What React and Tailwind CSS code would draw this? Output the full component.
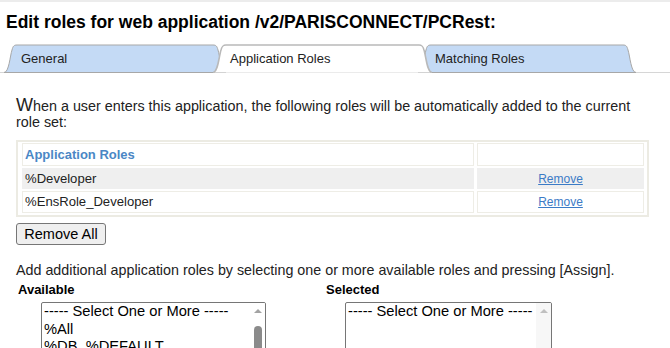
import React from "react";

const font = { fontFamily: '"Liberation Sans", Arial, sans-serif' };

const tabs = [
  { label: "General", cls: "w-[222px]", w: 222 },
  { label: "Application Roles", cls: "w-[219px] -ml-[13px] z-10", w: 219, active: true },
  { label: "Matching Roles", cls: "w-[218px] -ml-[14px]", w: 218 },
];

function tabPath(w, closed) {
  const d = `M0,28.5 C5,28.5 6,12 8,6 C9,2 10,1 13,1 L${w - 13},1 C${w - 10},1 ${w - 9},2 ${w - 8},6 C${w - 6},12 ${w - 5},28.5 ${w},28.5`;
  return closed ? d + " Z" : d;
}

function Tab({ tab }) {
  return (
    <div className={`relative h-[29px] shrink-0 ${tab.cls}`}>
      <svg className="absolute inset-0" width={tab.w} height="29" viewBox={`0 0 ${tab.w} 29`}>
        {tab.active ? (
          <>
            <path d={tabPath(tab.w, true)} fill="#ffffff" />
            <path d={tabPath(tab.w, false)} fill="none" stroke="#b9b9b9" strokeWidth="1.6" />
          </>
        ) : (
          <path d={tabPath(tab.w, true)} fill="#c4daf5" stroke="#a7a7a7" strokeWidth="1" />
        )}
      </svg>
      <span className="relative block pl-[17px] pt-[7px] text-[13px] leading-[15px] text-[#222]">{tab.label}</span>
    </div>
  );
}

function ListBox({ cls, items, active }) {
  return (
    <div className={`relative h-[70px] overflow-hidden rounded-[2px] border border-[#767676] bg-white ${cls}`}>
      {items.map((it) => (
        <div key={it} className="whitespace-nowrap pl-[2px] text-[14.7px] leading-[17.5px] text-black">
          {it}
        </div>
      ))}
      <div className={`absolute right-0 top-0 bottom-0 w-[15px] ${active ? "bg-white" : "bg-[#f7f7f7]"}`}>
        <div
          className={`mx-auto mt-[6px] h-0 w-0 border-x-[4px] border-b-[4px] border-x-transparent ${
            active ? "border-b-[#a3a3a3]" : "border-b-[#c0c0c0]"
          }`}
        />
        {active && <div className="mx-auto mt-[13px] h-[40px] w-[8px] rounded-full bg-[#8b8b8b]" />}
      </div>
    </div>
  );
}

export default function App() {
  return (
    <div className="h-[348px] w-[670px] overflow-hidden bg-white text-[#222]" style={font}>
      <div className="h-[2px] bg-[#ececec]" />
      <h1 className="ml-[6px] mt-[10px] text-[17.5px] font-bold leading-[20px] text-black">
        Edit roles for web application /v2/PARISCONNECT/PCRest:
      </h1>

      <div className="mt-[12px] flex h-[29px] items-start border-b border-[#d6d6d6] pl-[4px]">
        {tabs.map((t) => (
          <Tab key={t.label} tab={t} />
        ))}
      </div>

      <div className="ml-[16px] w-[633px]">
        <p className="mt-[24px] text-[14.35px] leading-[16px]">
          <span className="text-[18px]">W</span>hen a user enters this application, the following roles will be
          automatically added to the current role set:
        </p>

        <div className="mt-[10px] border-2 border-[#ecebe3] pb-[2px] pl-[4px] pr-[5px] pt-[1px]">
          <div className="grid grid-cols-[452px_167px] gap-x-[3px] gap-y-[2px] text-[13.1px]">
            <div className="flex h-[23px] items-center border border-[#eeede6] pl-[2px] text-[13px] font-bold text-[#4a87c5]">
              Application Roles
            </div>
            <div className="h-[23px] border border-[#eeede6]" />
            <div className="flex h-[21px] items-center border border-[#efefef] bg-[#efefef] pl-[2px]">%Developer</div>
            <div className="flex h-[21px] items-center justify-center border border-[#efefef] bg-[#efefef]">
              <a href="#" className="text-[12px] text-[#3b7bc6] underline">Remove</a>
            </div>
            <div className="flex h-[22px] items-center border border-[#eeede6] pl-[2px]">%EnsRole_Developer</div>
            <div className="flex h-[22px] items-center justify-center border border-[#eeede6]">
              <a href="#" className="text-[12px] text-[#3b7bc6] underline">Remove</a>
            </div>
          </div>
        </div>

        <button className="mt-[6px] block h-[22px] w-[90px] rounded-[3px] border border-[#767676] bg-[#efefef] text-[14.5px] leading-[18px] text-black">
          Remove All
        </button>

        <p className="mt-[17px] text-[14.3px] leading-[16px]">
          Add additional application roles by selecting one or more available roles and pressing [Assign].
        </p>

        <div className="mt-[4px] flex text-[13px] font-bold leading-[16px] text-black">
          <div className="w-[310px] pl-[2px]">Available</div>
          <div>Selected</div>
        </div>

        <div className="mt-[4px] flex">
          <div className="w-[310px] pl-[25px]">
            <ListBox cls="w-[225px]" active items={["----- Select One or More -----", "%All", "%DB_%DEFAULT"]} />
          </div>
          <div className="pl-[19px]">
            <ListBox cls="w-[207px]" items={["----- Select One or More -----"]} />
          </div>
        </div>
      </div>
    </div>
  );
}
